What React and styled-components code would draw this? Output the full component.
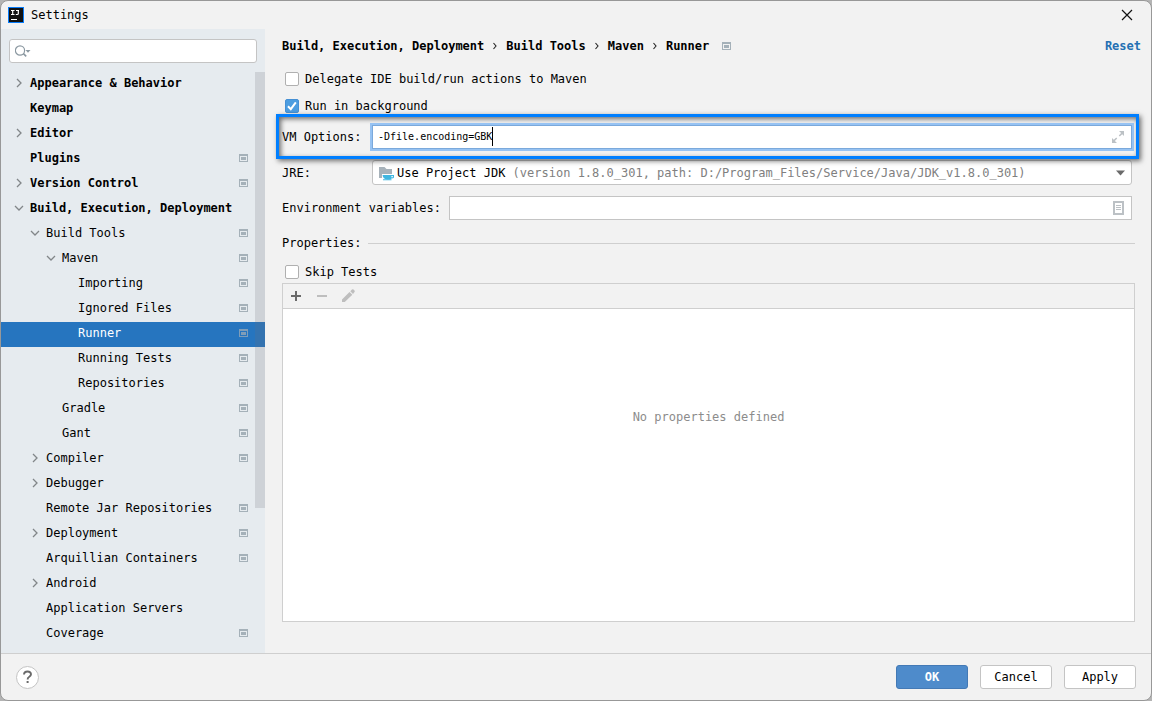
import React, { useState } from 'react';
import styled, { createGlobalStyle, css } from 'styled-components';

const GlobalStyle = createGlobalStyle`
  *, *::before, *::after {
    box-sizing: border-box;
  }
  body {
    margin: 0;
    background: #b4b4b4;
  }
  body, button, input, select {
    font-family: 'DejaVu Sans Mono', 'Liberation Mono', monospace;
    font-size: 12px;
    line-height: 20px;
    color: #000;
  }
  button {
    padding: 0;
    border: 0;
    background: none;
  }
`;

const Window = styled.div`
  display: flex;
  flex-direction: column;
  min-height: 100vh;
  overflow: hidden;
  background: #f2f2f2;
  border: 1px solid #989898;
  border-radius: 8px;
`;

const TitleBar = styled.header`
  display: flex;
  align-items: center;
  gap: 7px;
  height: 28px;
  padding: 0 16px 0 7px;
`;

const WindowTitle = styled.h1`
  flex: 1;
  margin: 0;
  font-size: 12px;
  font-weight: 400;
`;

const IconButton = styled.button`
  display: flex;
  align-items: center;
  justify-content: center;
  width: 16px;
  height: 16px;
`;

const Body = styled.div`
  display: flex;
  flex: 1;
`;

const Sidebar = styled.aside`
  display: flex;
  flex-direction: column;
  flex: none;
  gap: 9px;
  width: 264px;
  padding-top: 10px;
  background: #e6ebef;
`;

const SearchBox = styled.label`
  display: flex;
  align-items: center;
  gap: 4px;
  height: 24px;
  margin: 0 8px;
  padding: 0 5px;
  background: #fff;
  border: 1px solid #c4c4c4;
  border-radius: 3px;
`;

const SearchInput = styled.input`
  flex: 1;
  min-width: 0;
  padding: 0;
  border: 0;
  outline: 0;
  background: none;
`;

const TreeArea = styled.div`
  position: relative;
  flex: 1;
`;

const Tree = styled.ul`
  margin: 0;
  padding: 0;
  list-style: none;
`;

const TreeRow = styled.button`
  display: flex;
  align-items: center;
  gap: 3px;
  width: 100%;
  height: 25px;
  padding: 0 17px 3px ${({ $depth }) => 10 + $depth * 16}px;
  text-align: left;
  white-space: nowrap;
  ${({ $selected }) =>
    $selected &&
    css`
      background: #2675bf;
      color: #fff;
    `}
`;

const TreeLabel = styled.span`
  flex: 1;
  font-weight: ${({ $strong }) => ($strong ? 700 : 400)};
`;

const ArrowSlot = styled.span`
  display: flex;
  justify-content: center;
  width: 16px;
`;

const ScrollThumb = styled.div`
  position: absolute;
  top: 0;
  right: 0;
  width: 10px;
  height: 75%;
  background: rgba(110, 110, 120, 0.2);
  pointer-events: none;
`;

const Main = styled.main`
  display: flex;
  flex-direction: column;
  flex: 1;
  min-width: 0;
  padding: 7px 0 31px 17px;
`;

const Heading = styled.div`
  display: flex;
  align-items: center;
  height: 20px;
  padding-right: 10px;
`;

const Crumbs = styled.nav`
  display: flex;
  flex: 1;
  align-items: center;
  gap: 9px;
  font-weight: 700;
  white-space: nowrap;
  & > svg:last-child {
    margin-left: 4px;
  }
`;

const ResetLink = styled.a`
  color: #2470b3;
  font-weight: 700;
  text-decoration: none;
`;

const Form = styled.form`
  display: flex;
  flex-direction: column;
  flex: 1;
  padding-right: 16px;
`;

const CheckList = styled.div`
  display: grid;
  gap: 7px;
  padding: 13px 0 9px;
`;

const CheckLabel = styled.label`
  display: flex;
  align-items: center;
  gap: 6px;
  height: 20px;
  padding-left: 3px;
`;

const CheckBoxWrap = styled.span`
  display: grid;
  & > * {
    grid-area: 1 / 1;
  }
  & > svg {
    display: none;
    pointer-events: none;
  }
  & > input:checked + svg {
    display: block;
  }
`;

const CheckInput = styled.input`
  appearance: none;
  width: 14px;
  height: 14px;
  margin: 0;
  background: #fff;
  border: 1px solid #b0b0b0;
  border-radius: 2px;
  &:checked {
    background: #4d9de0;
    border-color: #4690d4;
  }
`;

const Fields = styled.div`
  display: grid;
  gap: 11px;
  padding-right: 3px;
`;

const FieldRow = styled.div`
  position: relative;
  display: flex;
  align-items: center;
`;

const Highlight = styled.div`
  position: absolute;
  inset: -11px -7px -10px -6px;
  border: 3px solid #007fff;
  box-shadow: 2px 2px 5px rgba(0, 0, 0, 0.55), inset 2px 2px 5px rgba(0, 0, 0, 0.55);
  pointer-events: none;
  z-index: 1;
`;

const FieldLabel = styled.label`
  flex: none;
  width: ${({ $wide }) => ($wide ? 167 : 90)}px;
  white-space: nowrap;
`;

const TextBox = styled.div`
  position: relative;
  display: flex;
  flex: 1;
  align-items: center;
  height: 24px;
  padding: 0 5px;
  background: #fff;
  border: 1px solid #c4c4c4;
  ${({ $focused }) =>
    $focused &&
    css`
      z-index: 2;
      border-color: #7ba9db;
      box-shadow: 0 0 0 2px #97c3f3;
    `}
`;

const TextInput = styled.input`
  flex: 1;
  min-width: 0;
  padding: 0;
  border: 0;
  outline: 0;
  background: none;
`;

const CodeInput = styled(TextInput)`
  font-size: 10px;
  caret-color: transparent;
`;

const Caret = styled.span`
  position: absolute;
  top: 1px;
  left: calc(5px + ${({ $column }) => $column}ch);
  width: 1px;
  height: 19px;
  background: #000;
  font-size: 10px;
`;

const SelectBox = styled.div`
  display: grid;
  flex: 1;
  min-width: 0;
  height: 25px;
  & > * {
    grid-area: 1 / 1;
  }
`;

const Select = styled.select`
  appearance: none;
  width: 100%;
  background: #fff;
  border: 1px solid #c4c4c4;
  border-radius: 3px;
  color: transparent;
  & option {
    color: #000;
  }
`;

const SelectValue = styled.div`
  display: flex;
  align-items: center;
  gap: 3px;
  min-width: 0;
  padding: 0 6px;
  white-space: nowrap;
  pointer-events: none;
  & > svg {
    flex: none;
  }
`;

const SelectText = styled.span`
  flex: 1;
`;

const Muted = styled.span`
  color: #808080;
`;

const GroupTitle = styled.div`
  display: flex;
  align-items: center;
  gap: 7px;
  height: 20px;
  margin: 13px 0 9px;
  &::after {
    content: '';
    flex: 1;
    height: 1px;
    background: #cfcfcf;
  }
`;

const PropertiesPanel = styled.section`
  display: flex;
  flex-direction: column;
  flex: 1;
  margin-top: 1px;
  border: 1px solid #cfcfcf;
`;

const Toolbar = styled.div`
  display: flex;
  align-items: center;
  gap: 10px;
  height: 25px;
  padding: 0 5px;
  border-bottom: 1px solid #cfcfcf;
`;

const EmptyState = styled.div`
  flex: 1;
  padding-top: 98px;
  background: #fff;
  color: #8c8c8c;
  text-align: center;
`;

const Footer = styled.footer`
  display: flex;
  align-items: center;
  gap: 12px;
  height: 47px;
  padding: 0 15px;
  border-top: 1px solid #cfcfcf;
`;

const HelpButton = styled.button`
  display: flex;
  align-items: center;
  justify-content: center;
  width: 23px;
  height: 23px;
  margin-right: auto;
  background: #fff;
  border: 1px solid #c4c4c4;
  border-radius: 50%;
`;

const DialogButton = styled.button`
  width: 72px;
  height: 24px;
  background: #fff;
  border: 1px solid #c4c4c4;
  border-radius: 3px;
  ${({ $primary }) =>
    $primary &&
    css`
      background: #4e8bcb;
      border-color: #4379b5;
      color: #fff;
      font-weight: 700;
    `}
`;

const AppLogo = () => (
  <svg width="16" height="16" viewBox="0 0 16 16">
    <rect width="16" height="16" fill="#087cfa" />
    <rect x="1" y="1" width="14" height="14" fill="#111" />
    <path d="M3 3.500h3.500M4.700 3.500v4M3 7.500h3.500M8 3.500h3M10.300 3.500v3q0 1-1 1H7.800" fill="none" stroke="#fff" strokeWidth="1.200" />
    <path d="M3 12.500h6" stroke="#fff" strokeWidth="1.200" />
  </svg>
);

const CloseIcon = () => (
  <svg width="12" height="12" viewBox="0 0 12 12">
    <path d="M1 1l10 10M11 1L1 11" stroke="#111" strokeWidth="1.200" />
  </svg>
);

const SearchIcon = () => (
  <svg width="17" height="14" viewBox="0 0 17 14">
    <circle cx="5" cy="6.500" r="4.600" fill="none" stroke="#8b98a1" strokeWidth="1.200" />
    <path d="M8.400 9.600l2.800 2.800" stroke="#8b98a1" strokeWidth="1.600" />
    <path d="M10.500 6h5L13 8.800z" fill="#8b98a1" />
  </svg>
);

const Arrow = ({ open }) => (
  <svg width="10" height="10" viewBox="0 0 10 10">
    <path d={open ? 'M1 3l4 4 4-4' : 'M3 1l4 4-4 4'} fill="none" stroke="#828689" strokeWidth="1.300" />
  </svg>
);

const ProjectIcon = ({ dimmed }) => (
  <svg width="9" height="8" viewBox="0 0 9 8" fill={dimmed ? '#7f9db8' : '#a5b1b9'}>
    <path d="M0 0h9v8H0zM1 2v5h7V2z" fillRule="evenodd" />
    <path d="M2 3h5v3H2z" />
  </svg>
);

const CrumbArrow = () => (
  <svg width="4" height="8" viewBox="0 0 4 8">
    <path d="M0.500 1l2.500 3-2.500 3" fill="none" stroke="#222" strokeWidth="1.100" />
  </svg>
);

const CheckMark = () => (
  <svg width="14" height="14" viewBox="0 0 14 14">
    <path d="M3 7.200l2.800 2.900L10.800 3.400" fill="none" stroke="#fff" strokeWidth="2" />
  </svg>
);

const ExpandIcon = () => (
  <svg width="14" height="14" viewBox="0 0 14 14">
    <path d="M8 1h5v5l-1.800-1.800-2.400 2.300-1-1 2.300-2.400zM6 13H1V8l1.800 1.800 2.400-2.300 1 1-2.300 2.400z" fill="#bcc1c5" />
  </svg>
);

const JdkIcon = () => (
  <svg width="16" height="16" viewBox="0 0 16 16">
    <path d="M1 2h5.500l2 2H14v5H4v4H1z" fill="#a7b2ba" />
    <path d="M4.500 10H16v2.500q-.5 1-2.500 1-1 1-2.500 1H9q-4-.3-4.500-4.500z" fill="#40b6e0" />
    <path d="M13.500 11h1.300v1.200h-1.500z" fill="#fff" />
    <path d="M5 14.200h8.500v1H5z" fill="#40b6e0" />
  </svg>
);

const DropArrow = () => (
  <svg width="10" height="6" viewBox="0 0 10 6">
    <path d="M0 0.500h9L4.500 5.500z" fill="#6a6a6a" />
  </svg>
);

const ListIcon = () => (
  <svg width="11" height="14" viewBox="0 0 11 14">
    <path d="M1 1h9v12H1z" fill="none" stroke="#bcc1c5" strokeWidth="2" />
    <path d="M3 4.500h5M3 6.500h5M3 8.500h5" stroke="#bcc1c5" />
  </svg>
);

const AddIcon = () => (
  <svg width="16" height="16" viewBox="0 0 16 16">
    <path d="M8 3v10M3 8h10" stroke="#6a6a6a" strokeWidth="2" />
  </svg>
);

const RemoveIcon = () => (
  <svg width="16" height="16" viewBox="0 0 16 16">
    <path d="M3 8h10" stroke="#bebebe" strokeWidth="2" />
  </svg>
);

const EditIcon = () => (
  <svg width="16" height="16" viewBox="0 0 16 16">
    <path d="M2 11.500L9.500 4l2.800 2.800L4.800 14H2zM10.300 3.200L12 1.500q.8-.6 1.500 0l1 1q.7.800 0 1.500L13 6z" fill="#bebebe" />
  </svg>
);

const HelpIcon = () => (
  <svg width="11" height="14" viewBox="0 0 11 14">
    <path d="M2 4.500Q2 1.500 5.500 1.500T9 4.300Q9 5.700 7.300 6.700T5.600 9.400" fill="none" stroke="#6a6a6a" strokeWidth="1.900" />
    <path d="M4.600 11h2v2h-2z" fill="#6a6a6a" />
  </svg>
);

const sections = [
  { label: 'Appearance & Behavior', depth: 0, arrow: 'closed' },
  { label: 'Keymap', depth: 0 },
  { label: 'Editor', depth: 0, arrow: 'closed' },
  { label: 'Plugins', depth: 0, project: true },
  { label: 'Version Control', depth: 0, arrow: 'closed', project: true },
  { label: 'Build, Execution, Deployment', depth: 0, arrow: 'open' },
  { label: 'Build Tools', depth: 1, arrow: 'open', project: true },
  { label: 'Maven', depth: 2, arrow: 'open', project: true },
  { label: 'Importing', depth: 3, project: true },
  { label: 'Ignored Files', depth: 3, project: true },
  { label: 'Runner', depth: 3, project: true },
  { label: 'Running Tests', depth: 3, project: true },
  { label: 'Repositories', depth: 3, project: true },
  { label: 'Gradle', depth: 2, project: true },
  { label: 'Gant', depth: 2, project: true },
  { label: 'Compiler', depth: 1, arrow: 'closed', project: true },
  { label: 'Debugger', depth: 1, arrow: 'closed' },
  { label: 'Remote Jar Repositories', depth: 1, project: true },
  { label: 'Deployment', depth: 1, arrow: 'closed', project: true },
  { label: 'Arquillian Containers', depth: 1, project: true },
  { label: 'Android', depth: 1, arrow: 'closed' },
  { label: 'Application Servers', depth: 1 },
  { label: 'Coverage', depth: 1, project: true },
];

const crumbs = ['Build, Execution, Deployment', 'Build Tools', 'Maven', 'Runner'];

const CheckField = ({ label, checked }) => (
  <CheckLabel>
    <CheckBoxWrap>
      <CheckInput type="checkbox" defaultChecked={checked} />
      <CheckMark />
    </CheckBoxWrap>
    {label}
  </CheckLabel>
);

const App = () => {
  const [selected, setSelected] = useState('Runner');
  const [vmOptions, setVmOptions] = useState('-Dfile.encoding=GBK');

  return (
    <Window>
      <GlobalStyle />
      <TitleBar>
        <AppLogo />
        <WindowTitle>Settings</WindowTitle>
        <IconButton aria-label="Close">
          <CloseIcon />
        </IconButton>
      </TitleBar>
      <Body>
        <Sidebar>
          <SearchBox>
            <SearchIcon />
            <SearchInput type="text" aria-label="Search settings" />
          </SearchBox>
          <TreeArea>
            <Tree>
              {sections.map(({ label, depth, arrow, project }) => (
                <li key={label}>
                  <TreeRow $depth={depth} $selected={label === selected} onClick={() => setSelected(label)}>
                    <ArrowSlot>{arrow && <Arrow open={arrow === 'open'} />}</ArrowSlot>
                    <TreeLabel $strong={depth === 0}>{label}</TreeLabel>
                    {project && <ProjectIcon dimmed={label === selected} />}
                  </TreeRow>
                </li>
              ))}
            </Tree>
            <ScrollThumb />
          </TreeArea>
        </Sidebar>
        <Main>
          <Heading>
            <Crumbs aria-label="Breadcrumb">
              {crumbs.map((crumb, idx) => (
                <React.Fragment key={crumb}>
                  {idx > 0 && <CrumbArrow />}
                  <span>{crumb}</span>
                </React.Fragment>
              ))}
              <ProjectIcon />
            </Crumbs>
            <ResetLink href="#reset">Reset</ResetLink>
          </Heading>
          <Form onSubmit={(e) => e.preventDefault()}>
            <CheckList>
              <CheckField label="Delegate IDE build/run actions to Maven" />
              <CheckField label="Run in background" checked />
            </CheckList>
            <Fields>
              <FieldRow>
                <Highlight />
                <FieldLabel htmlFor="vm-options">VM Options:</FieldLabel>
                <TextBox $focused>
                  <CodeInput
                    id="vm-options"
                    type="text"
                    value={vmOptions}
                    onChange={(e) => setVmOptions(e.target.value)}
                  />
                  <Caret $column={vmOptions.length} />
                  <IconButton type="button" aria-label="Expand">
                    <ExpandIcon />
                  </IconButton>
                </TextBox>
              </FieldRow>
              <FieldRow>
                <FieldLabel htmlFor="jre">JRE:</FieldLabel>
                <SelectBox>
                  <Select id="jre">
                    <option>Use Project JDK</option>
                  </Select>
                  <SelectValue aria-hidden="true">
                    <JdkIcon />
                    <SelectText>
                      Use Project JDK{' '}
                      <Muted>(version 1.8.0_301, path: D:/Program_Files/Service/Java/JDK_v1.8.0_301)</Muted>
                    </SelectText>
                    <DropArrow />
                  </SelectValue>
                </SelectBox>
              </FieldRow>
              <FieldRow>
                <FieldLabel $wide htmlFor="env">
                  Environment variables:
                </FieldLabel>
                <TextBox>
                  <TextInput id="env" type="text" />
                  <IconButton type="button" aria-label="Edit variables">
                    <ListIcon />
                  </IconButton>
                </TextBox>
              </FieldRow>
            </Fields>
            <GroupTitle>Properties:</GroupTitle>
            <CheckField label="Skip Tests" />
            <PropertiesPanel>
              <Toolbar>
                <IconButton type="button" aria-label="Add">
                  <AddIcon />
                </IconButton>
                <IconButton type="button" aria-label="Remove" disabled>
                  <RemoveIcon />
                </IconButton>
                <IconButton type="button" aria-label="Edit" disabled>
                  <EditIcon />
                </IconButton>
              </Toolbar>
              <EmptyState>No properties defined</EmptyState>
            </PropertiesPanel>
          </Form>
        </Main>
      </Body>
      <Footer>
        <HelpButton aria-label="Help">
          <HelpIcon />
        </HelpButton>
        <DialogButton $primary>OK</DialogButton>
        <DialogButton>Cancel</DialogButton>
        <DialogButton>Apply</DialogButton>
      </Footer>
    </Window>
  );
};

export default App;
